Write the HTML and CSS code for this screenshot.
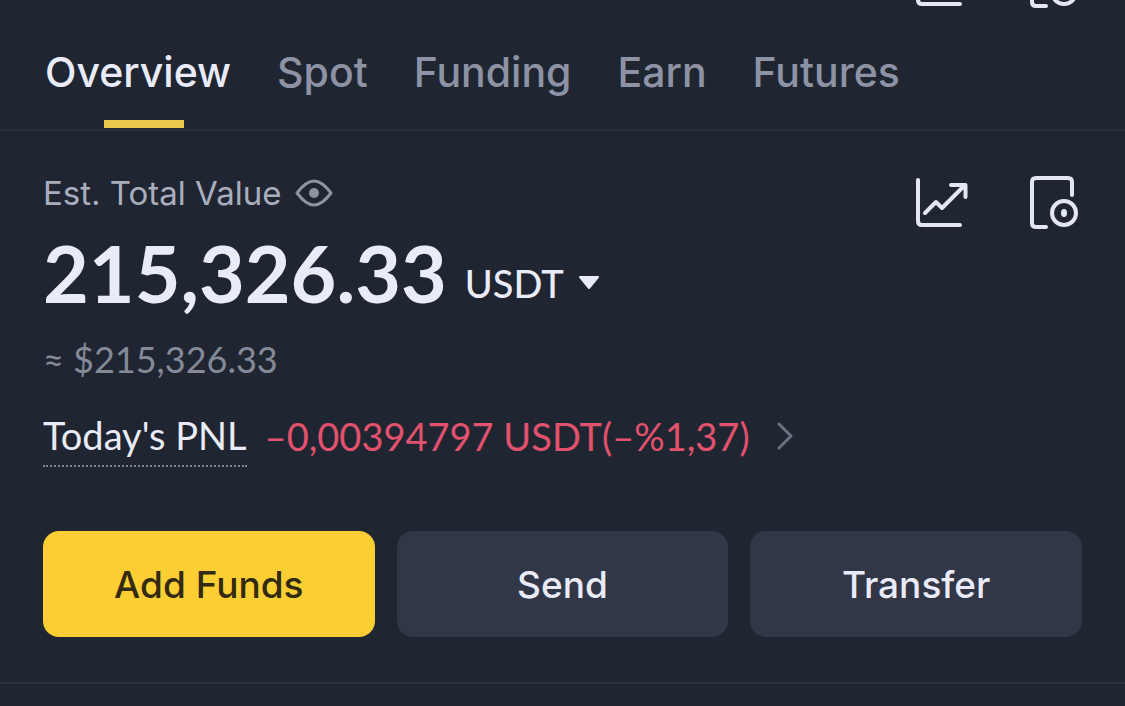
FILE: index.html
```html
<!DOCTYPE html>
<html lang="en">
<head>
    <meta charset="UTF-8">
    <meta name="viewport" content="width=device-width, initial-scale=1.0">
    <title>Wallet Overview</title>
    <link rel="stylesheet" href="styles.css">
</head>
<body>
    <svg class="sprite" aria-hidden="true">
        <symbol id="icon-chart" viewBox="0 0 54 54">
            <path d="M4 5V46Q4 50 8 50H46"/>
            <path d="M11 38L22 27L28 33L51 10M37 10H51.500V22"/>
        </symbol>
        <symbol id="icon-record" viewBox="0 0 54 54">
            <path d="M18 52H8Q4 52 4 48V7Q4 3 8 3H40Q44 3 44 7V20"/>
            <circle cx="36" cy="38" r="12"/>
            <ellipse class="dot" cx="36" cy="38" rx="3" ry="4"/>
        </symbol>
    </svg>

    <div class="top-bar">
        <div class="icons">
            <svg class="icon"><use href="#icon-chart"/></svg>
            <svg class="icon"><use href="#icon-record"/></svg>
        </div>
    </div>

    <nav class="tabs">
        <a class="tab active" href="#overview">Overview</a>
        <a class="tab" href="#spot">Spot</a>
        <a class="tab" href="#funding">Funding</a>
        <a class="tab" href="#earn">Earn</a>
        <a class="tab" href="#futures">Futures</a>
    </nav>

    <main class="wallet">
        <div class="summary">
            <div class="balance">
                <div class="label-row">
                    <span>Est. Total Value</span>
                    <button class="icon-button" aria-label="Hide balance">
                        <svg class="eye" viewBox="0 0 38 28">
                            <path d="M2 14Q11 2 19 2T36 14Q27 26 19 26T2 14Z"/>
                            <circle cx="19" cy="14" r="5"/>
                        </svg>
                    </button>
                </div>
                <div class="total">
                    <span class="amount">215,326.33</span>
                    <button class="currency">USDT
                        <svg class="caret" viewBox="0 0 22 14"><path d="M2 1H20L11 12Z"/></svg>
                    </button>
                </div>
                <div class="fiat">≈ $215,326.33</div>
            </div>
            <div class="icons">
                <button class="icon-button" aria-label="Analysis"><svg class="icon"><use href="#icon-chart"/></svg></button>
                <button class="icon-button" aria-label="History"><svg class="icon"><use href="#icon-record"/></svg></button>
            </div>
        </div>

        <a class="pnl" href="#pnl">
            <span class="pnl-label">Today's PNL</span>
            <span class="pnl-value">–0,00394797 USDT(–%1,37)</span>
            <svg class="chevron" viewBox="0 0 18 28"><path d="M3 2L15 14L3 26"/></svg>
        </a>

        <div class="actions">
            <button class="action primary">Add Funds</button>
            <button class="action">Send</button>
            <button class="action">Transfer</button>
        </div>
    </main>
</body>
</html>
```

FILE: styles.css
```css
* {
    box-sizing: border-box;
}
body {
    margin: 0;
    background-color: #202631;
    color: #e9ecf8;
    font-family: Lato, "Open Sans", sans-serif;
    font-size: 36px;
}
a {
    color: inherit;
    text-decoration: none;
}
button {
    padding: 0;
    border: none;
    background: none;
    color: inherit;
    font: inherit;
    cursor: pointer;
}
svg {
    display: block;
    fill: none;
    stroke: currentColor;
    stroke-linecap: round;
    stroke-linejoin: round;
}
.sprite {
    width: 0;
    height: 0;
    position: absolute;
}
.icons {
    display: flex;
    align-items: flex-start;
    gap: 60px;
    color: #e4e7f3;
}
.icon {
    width: 54px;
    height: 54px;
    stroke-width: 4px;
}
.dot {
    fill: currentColor;
    stroke: none;
}
.top-bar {
    display: flex;
    justify-content: flex-end;
    align-items: flex-end;
    height: 8px;
    padding: 0 43px;
    overflow: hidden;
}
.tabs {
    display: flex;
    gap: 46px;
    height: 123px;
    padding: 0 45px;
    border-bottom: 2px solid #2a303c;
    font-family: Inter, sans-serif;
    font-size: 41px;
    font-weight: 500;
    line-height: 48px;
    color: #8d93a5;
}
.tab {
    position: relative;
    padding-top: 40px;
}
.active {
    color: #e9ecf8;
}
.active::after {
    content: "";
    position: absolute;
    left: 50%;
    bottom: 1px;
    width: 80px;
    height: 8px;
    margin-left: -34px;
    background-color: #e9c94b;
}
.wallet {
    padding: 44px 43px 45px;
    border-bottom: 2px solid #2b313d;
}
.summary {
    display: flex;
    justify-content: space-between;
}
.label-row {
    display: flex;
    align-items: center;
    gap: 14px;
    height: 36px;
    font-family: Inter, sans-serif;
    font-size: 33px;
    color: #a9aebd;
}
.eye {
    width: 38px;
    height: 28px;
    stroke-width: 3px;
    color: #8d93a1;
}
.eye circle {
    fill: currentColor;
    stroke: none;
}
.total {
    display: flex;
    align-items: center;
    gap: 18px;
    margin-top: 16px;
}
.amount {
    font-size: 79px;
    font-weight: 700;
    line-height: 92px;
}
.currency {
    display: flex;
    align-items: center;
    gap: 14px;
    padding-top: 20px;
    font-size: 38px;
    font-weight: 500;
}
.caret {
    width: 22px;
    height: 14px;
    fill: currentColor;
    stroke-width: 2px;
}
.fiat {
    margin-top: 18px;
    line-height: 44px;
    color: #858a98;
}
.pnl {
    display: flex;
    align-items: center;
    gap: 18px;
    margin-top: 32px;
    line-height: 44px;
    font-size: 38px;
}
.pnl-label {
    padding-bottom: 8px;
    border-bottom: 2px dotted #7d8392;
}
.pnl-value {
    padding-bottom: 8px;
    color: #e2516d;
}
.chevron {
    width: 18px;
    height: 28px;
    margin: 0 0 8px 8px;
    stroke-width: 3px;
    color: #697080;
}
.actions {
    display: grid;
    grid-template-columns: repeat(3, 1fr);
    gap: 22px;
    margin-top: 64px;
}
.action {
    height: 106px;
    border-radius: 16px;
    background-color: #313747;
    font-family: Inter, sans-serif;
    font-size: 37px;
    font-weight: 500;
}
.primary {
    background-color: #fbcf34;
    color: #332a12;
}
```
